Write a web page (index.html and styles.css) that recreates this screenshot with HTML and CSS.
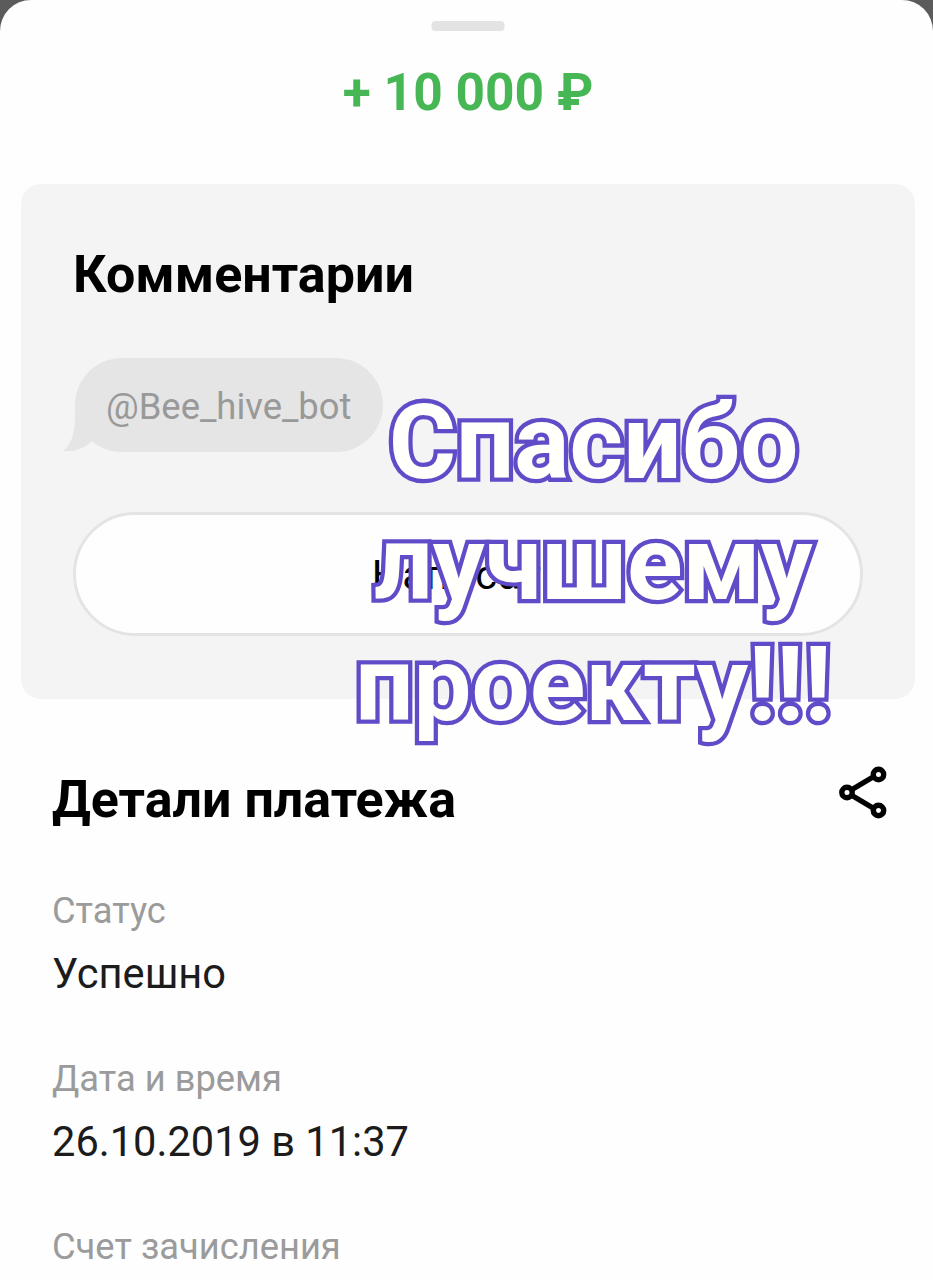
FILE: index.html
```html
<!DOCTYPE html>
<html lang="ru">
<head>
    <meta charset="utf-8">
    <title>Детали платежа</title>
    <link rel="stylesheet" href="styles.css">
</head>
<body>
    <div class="sheet">
        <div class="handle"></div>
        <div class="amount">+ 10 000 ₽</div>

        <div class="comments">
            <h2>Комментарии</h2>
            <div class="bubble">
                <svg class="bubble-tail" width="44" height="44" viewBox="0 0 44 44">
                    <path d="M12 0 V10 C12 25 8 37 0 43 C10 44 20 41 27 35 L44 20 V0 Z" fill="#e5e5e5"/>
                </svg>
                <span>@Bee_hive_bot</span>
            </div>
            <button class="write-btn">Написать</button>
        </div>

        <div class="details">
            <div class="details-header">
                <h2>Детали платежа</h2>
                <svg class="share" width="50" height="54" viewBox="0 0 50 54" fill="none" stroke="#000" stroke-width="5.4">
                    <path d="M13 24.500 L34 12 M13 30.500 L34 43"/>
                    <circle cx="8" cy="27.500" r="5.200"/>
                    <circle cx="39.500" cy="9.500" r="5.200"/>
                    <circle cx="39.500" cy="45.500" r="5.200"/>
                </svg>
            </div>
            <div class="row">
                <div class="label">Статус</div>
                <div class="value">Успешно</div>
            </div>
            <div class="row">
                <div class="label">Дата и время</div>
                <div class="value">26.10.2019 в 11:37</div>
            </div>
            <div class="row">
                <div class="label">Счет зачисления</div>
            </div>
        </div>
    </div>

    <div class="caption">Спасибо<br>лучшему<br>проекту!!!</div>
</body>
</html>
```
FILE: styles.css
```css
* {
    box-sizing: border-box;
}

body {
    margin: 0;
    height: 1280px;
    overflow: hidden;
    position: relative;
    background-color: #5c5b5c;
    font-family: Roboto, sans-serif;
    color: #000;
}

h2 {
    margin: 0;
    font-size: 52px;
    line-height: 62px;
    font-weight: bold;
}

.sheet {
    height: 1280px;
    padding-top: 21px;
    overflow: hidden;
    background-color: #fefefe;
    border-radius: 31px 31px 0 0;
}

.handle {
    width: 73px;
    height: 10px;
    margin: 0 auto;
    border-radius: 4px;
    background-color: #e3e3e3;
    transform: translateX(1.5px);
}

.amount {
    margin-top: 31px;
    padding-left: 3px;
    font-size: 51.5px;
    line-height: 62px;
    font-weight: bold;
    text-align: center;
    color: #46b754;
}

.comments {
    height: 515px;
    margin: 60px 18px 0 21px;
    padding: 60px 52px 0;
    border-radius: 20px;
    background-color: #f4f4f4;
}

.bubble {
    position: relative;
    display: flex;
    align-items: center;
    width: 308px;
    height: 94px;
    margin: 52px 0 0 2px;
    padding: 3px 0 0 31px;
    border-radius: 47px;
    background-color: #e5e5e5;
    color: #999;
    font-size: 36.4px;
}

.bubble-tail {
    position: absolute;
    left: -12px;
    bottom: 0;
}

.bubble span {
    position: relative;
}

.write-btn {
    display: block;
    width: 790px;
    height: 124px;
    margin-top: 60px;
    padding: 0 0 0 1px;
    border: 3px solid #e4e4e4;
    border-radius: 62px;
    background-color: #fefefe;
    font-family: inherit;
    font-size: 41.5px;
    letter-spacing: 0.9px;
    color: #000;
}

.details {
    padding: 66px 44px 0 52px;
}

.details-header {
    display: flex;
    justify-content: space-between;
    align-items: flex-start;
    margin-bottom: 55px;
}

.details-header h2 {
    padding-top: 4px;
}

.row {
    height: 168px;
}

.label {
    font-size: 36.3px;
    line-height: 50px;
    color: #9b9b9b;
}

.value {
    margin-top: 12px;
    font-size: 41.6px;
    line-height: 52px;
    color: #1c1c1c;
}

/* text sticker on top of the sheet */
.caption {
    position: absolute;
    top: 382px;
    left: 343.5px;
    width: 500px;
    font-size: 103px;
    line-height: 121px;
    font-weight: bold;
    text-align: center;
    white-space: nowrap;
    color: #fffffc;
    -webkit-text-stroke: 8.6px #604bc8;
    paint-order: stroke fill;
}
```
